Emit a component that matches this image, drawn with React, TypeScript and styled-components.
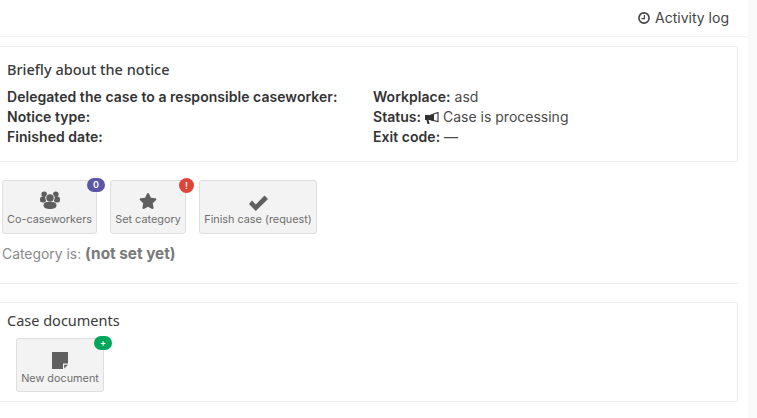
import React from "react";
import styled, { createGlobalStyle } from "styled-components";
import { FaStar } from "react-icons/fa";

const GlobalStyle = createGlobalStyle`
  html, body {
    margin: 0;
    padding: 0;
    background: #fafafa;
    overflow: hidden;
  }
  body {
    font-family: Inter, "Liberation Sans", sans-serif;
    font-size: 14px;
    line-height: 20px;
    color: #3d3d3d;
  }
`;

const Page = styled.div`
  width: 748px;
  height: 418px;
  background: #fff;
  overflow: hidden;
`;

const TopBar = styled.div`
  height: 37px;
  box-sizing: border-box;
  border-bottom: 1px solid #f1f1f1;
  display: flex;
  justify-content: flex-end;
  align-items: center;
  padding: 0 19px 0 0;
`;

const LogLink = styled.span`
  display: flex;
  align-items: center;
  gap: 5px;
  font-size: 14px;
  color: #444;
`;

const Panel = styled.section<{ $height: number; $top: number }>`
  box-sizing: border-box;
  height: ${(p) => p.$height}px;
  width: 748px;
  margin: ${(p) => p.$top}px 0 0 -10px;
  padding-left: 16px;
  border: 1px solid #ececec;
  border-radius: 3px;
`;

const PanelTitle = styled.h3<{ $weight: number; $pad: number }>`
  margin: 0;
  font-family: "Noto Sans", sans-serif;
  font-size: 14.5px;
  line-height: 20px;
  font-weight: ${(p) => p.$weight};
  color: #3a3a3a;
  padding-top: ${(p) => p.$pad}px;
`;

const Facts = styled.div`
  display: grid;
  grid-template-columns: 366px 1fr;
  margin-top: 8px;
`;

const Fact = styled.div`
  line-height: 20px;
  font-size: 14px;
  white-space: nowrap;
  color: #4a4a4a;

  b {
    font-weight: 600;
    letter-spacing: 0.04px;
    color: #333;
  }
  svg {
    vertical-align: -2px;
  }
`;

const ButtonRow = styled.div<{ $left: number; $top: number }>`
  display: flex;
  gap: 13px;
  margin: ${(p) => p.$top}px 0 0 ${(p) => p.$left}px;
`;

const ActionButton = styled.div<{ $width: number; $textPad?: number }>`
  position: relative;
  box-sizing: border-box;
  width: ${(p) => p.$width}px;
  height: 54px;
  background: #f3f3f3;
  border: 1px solid #dedede;
  border-radius: 3px;
  display: flex;
  flex-direction: column;
  align-items: center;
  justify-content: flex-end;
  padding-bottom: ${(p) => p.$textPad ?? 6}px;
  font-size: 10.85px;
  line-height: 16px;
  color: #6e6e6e;
  white-space: nowrap;
`;

const IconSlot = styled.div<{ $drop: number }>`
  box-sizing: border-box;
  height: 20px;
  padding-top: ${(p) => p.$drop}px;
  display: flex;
  align-items: flex-start;
  justify-content: center;
  color: #5f5f5f;
  margin-bottom: 1px;
`;

const Badge = styled.span<{ $color: string; $wide?: boolean }>`
  position: absolute;
  top: -3px;
  right: -9px;
  min-width: ${(p) => (p.$wide ? 18 : 15)}px;
  height: ${(p) => (p.$wide ? 14 : 15)}px;
  border-radius: 8px;
  background: ${(p) => p.$color};
  color: #fff;
  font-size: 9px;
  font-weight: 600;
  line-height: ${(p) => (p.$wide ? 14 : 15)}px;
  text-align: center;
`;

const CategoryLine = styled.div`
  margin: 10px 0 0 2px;
  font-size: 13.9px;
  line-height: 20px;
  color: #8a8a8a;

  b {
    font-size: 15.3px;
    font-weight: 700;
    color: #7a7a7a;
  }
`;

const Divider = styled.hr`
  width: 748px;
  height: 1px;
  margin: 19px 0 0 -10px;
  border: 0;
  background: #ececec;
`;

const ClockIcon = () => (
  <svg width="12" height="12" viewBox="0 0 12 12" fill="none" stroke="currentColor">
    <circle cx="6" cy="6" r="5.1" strokeWidth="1.6" />
    <path d="M6.4 3v3.6H3.4" strokeWidth="1.2" />
  </svg>
);

const BullhornIcon = () => (
  <svg width="14" height="12" viewBox="0 0 14 12">
    <path d="M0 3h6v5H3.6l1 4H2.5L1.5 8H0z" fill="#333" />
    <path d="M6 3l7-2.5v9L6 8z" fill="#fff" stroke="#333" strokeWidth="1.1" />
    <path d="M6 3l3-1v6.8L6 8z" fill="#333" />
  </svg>
);

const UsersIcon = () => (
  <svg width="20" height="18" viewBox="0 0 20 18" fill="currentColor">
    <circle cx="4.2" cy="3.2" r="2.8" />
    <circle cx="15.8" cy="3.2" r="2.8" />
    <rect x="0" y="5.5" width="6" height="6" rx="2.5" />
    <rect x="14" y="5.5" width="6" height="6" rx="2.5" />
    <circle cx="10" cy="7" r="4.6" fill="#f3f3f3" />
    <circle cx="10" cy="7" r="3.7" />
    <path d="M3.5 14.5c0-2 1.5-3.5 3.5-3.5h6c2 0 3.5 1.5 3.5 3.5 0 2.400-3 3.500-6.500 3.500s-6.500-1.100-6.500-3.500z" />
  </svg>
);

const CheckIcon = () => (
  <svg width="19" height="16" viewBox="0 0 19 16" fill="currentColor">
    <path d="M3 5.600l3.800 3.800L15.500 0.500 19 4 6.800 16 0 9z" />
  </svg>
);

const NoteIcon = () => (
  <svg width="16" height="17" viewBox="0 0 16 17" fill="currentColor">
    <path d="M0 0h16v11.500h-5v5.500H0z" />
    <path d="M12.200 12.700H16L12.200 16.500z" />
  </svg>
);

export default function App() {
  return (
    <Page>
      <GlobalStyle />
      <TopBar>
        <LogLink>
          <ClockIcon />
          Activity log
        </LogLink>
      </TopBar>

      <Panel $height={116} $top={9}>
        <PanelTitle $weight={500} $pad={12}>Briefly about the notice</PanelTitle>
        <Facts>
          <Fact><b>Delegated the case to a responsible caseworker:</b></Fact>
          <Fact><b>Workplace:</b> asd</Fact>
          <Fact><b>Notice type:</b></Fact>
          <Fact><b>Status:</b> <BullhornIcon /> Case is processing</Fact>
          <Fact><b>Finished date:</b></Fact>
          <Fact><b>Exit code:</b> —</Fact>
        </Facts>
      </Panel>

      <ButtonRow $left={2} $top={18}>
        <ActionButton $width={95}>
          <IconSlot $drop={1}><UsersIcon /></IconSlot>
          Co-caseworkers
          <Badge $color="#5b57a6" $wide>0</Badge>
        </ActionButton>
        <ActionButton $width={76}>
          <IconSlot $drop={2}><FaStar size={18} /></IconSlot>
          Set category
          <Badge $color="#de4437">!</Badge>
        </ActionButton>
        <ActionButton $width={118}>
          <IconSlot $drop={5}><CheckIcon /></IconSlot>
          Finish case (request)
        </ActionButton>
      </ButtonRow>

      <CategoryLine>Category is: <b>(not set yet)</b></CategoryLine>

      <Divider />

      <Panel $height={100} $top={18}>
        <PanelTitle $weight={400} $pad={7}>Case documents</PanelTitle>
        <ButtonRow $left={9} $top={8}>
          <ActionButton $width={88} $textPad={5}>
            <IconSlot $drop={3}><NoteIcon /></IconSlot>
            New document
            <Badge $color="#00a65a" $wide>+</Badge>
          </ActionButton>
        </ButtonRow>
      </Panel>
    </Page>
  );
}
